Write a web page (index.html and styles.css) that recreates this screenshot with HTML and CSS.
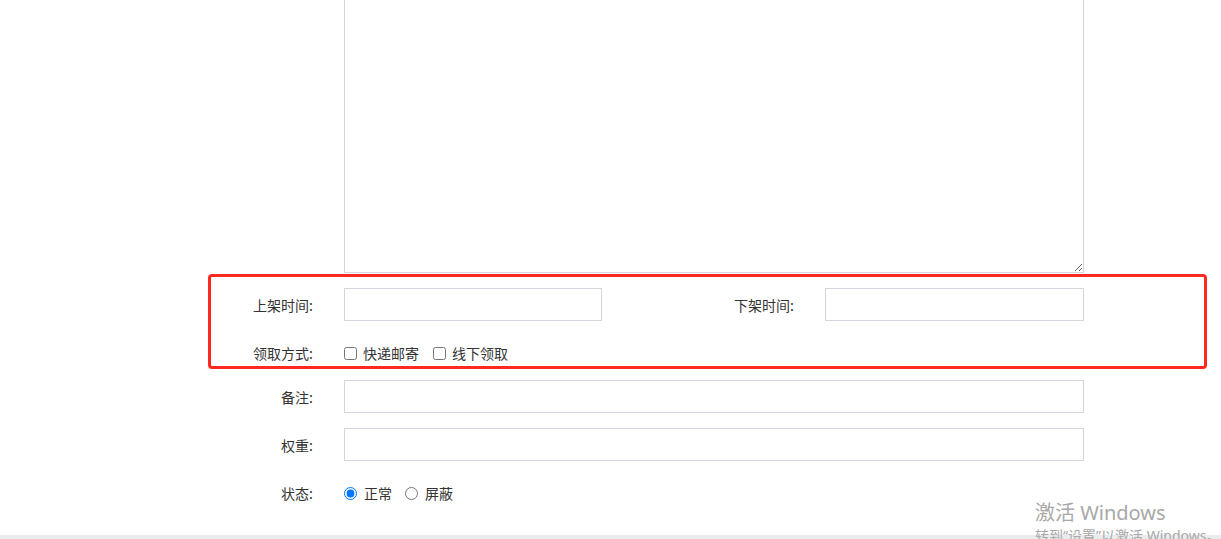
FILE: index.html
```html
<!DOCTYPE html>
<html lang="zh-CN">
<head>
<meta charset="utf-8">
<title>表单</title>
<link rel="stylesheet" href="styles.css">
</head>
<body>
<div class="page">
  <form class="form">
    <div class="row row-textarea">
      <span class="label"></span>
      <textarea class="textarea"></textarea>
    </div>
    <div class="row row-time">
      <div class="half">
        <label class="label">上架时间:</label>
        <input class="input input-half" type="text">
      </div>
      <div class="half">
        <label class="label label-wide">下架时间:</label>
        <input class="input input-half" type="text">
      </div>
    </div>
    <div class="row row-check">
      <span class="label">领取方式:</span>
      <div class="options">
        <label class="option"><input type="checkbox" class="box">快递邮寄</label>
        <label class="option"><input type="checkbox" class="box">线下领取</label>
      </div>
    </div>
    <div class="row row-note">
      <label class="label">备注:</label>
      <input class="input input-full" type="text">
    </div>
    <div class="row row-weight">
      <label class="label">权重:</label>
      <input class="input input-full" type="text">
    </div>
    <div class="row row-status">
      <span class="label">状态:</span>
      <div class="options">
        <label class="option"><input type="radio" name="status" class="radio" checked>正常</label>
        <label class="option"><input type="radio" name="status" class="radio">屏蔽</label>
      </div>
    </div>
  </form>
  <div class="bar"></div>
  <div class="highlight"></div>
  <div class="watermark">
    <div class="wm-title">激活 Windows</div>
    <div class="wm-sub">转到“设置”以激活 Windows。</div>
  </div>
</div>
</body>
</html>
```

FILE: styles.css
```css
* { box-sizing: border-box; }

html, body {
  margin: 0;
  padding: 0;
  background: #fff;
}

body {
  font-family: "Noto Sans CJK SC", "Noto Sans", sans-serif;
  font-size: 14px;
  color: #333;
}

.page {
  position: relative;
  width: 1221px;
  height: 539px;
  overflow: hidden;
  display: flex;
  flex-direction: column;
}

.form {
  flex: 1;
  display: flex;
  flex-direction: column;
}

.row {
  display: flex;
  align-items: center;
}

.label {
  flex: none;
  width: 344px;
  padding-right: 31px;
  text-align: right;
  line-height: 20px;
  color: #333;
}

.label-wide { width: 223px; }

.half {
  display: flex;
  align-items: center;
}

.textarea {
  display: block;
  width: 740px;
  height: 273px;
  margin: 0;
  border: 1px solid #d5d6df;
  border-top-width: 0;
  border-radius: 0;
  resize: both;
  font-family: inherit;
  outline: none;
}

.input {
  height: 33px;
  margin: 0;
  border: 1px solid #d5d6df;
  border-radius: 0;
  padding: 0 8px;
  font-family: inherit;
  font-size: 14px;
  outline: none;
}

.input-half { width: 258px; }
.half + .half .input-half { width: 259px; }
.input-full { width: 740px; }

.row-time { margin-top: 15px; }
.row-check { margin-top: 16px; height: 32px; }
.row-note { margin-top: 11px; }
.row-weight { margin-top: 15px; }
.row-status { margin-top: 16px; height: 32px; }

.options {
  display: flex;
  align-items: center;
  gap: 14px;
}

.option {
  display: flex;
  align-items: center;
  gap: 6px;
  line-height: 20px;
  color: #333;
}

.box, .radio {
  width: 13px;
  height: 13px;
  margin: 0;
}

.row-status .options { gap: 13px; }
.row-status .option { gap: 7px; }

.bar {
  flex: none;
  height: 4px;
  background: #e9ecec;
}

.highlight {
  position: absolute;
  left: 208px;
  top: 274px;
  width: 999px;
  height: 95px;
  border: 3px solid #ff2a1f;
  border-radius: 4px;
  pointer-events: none;
}

.watermark {
  position: absolute;
  left: 1035px;
  top: 499px;
  color: #a8a8a8;
  white-space: nowrap;
  pointer-events: none;
  font-family: "Noto Sans", "Noto Sans CJK SC", sans-serif;
}

.wm-title {
  font-size: 20px;
  line-height: 28px;
}

.wm-sub {
  font-size: 14px;
  line-height: 18px;
}
```
